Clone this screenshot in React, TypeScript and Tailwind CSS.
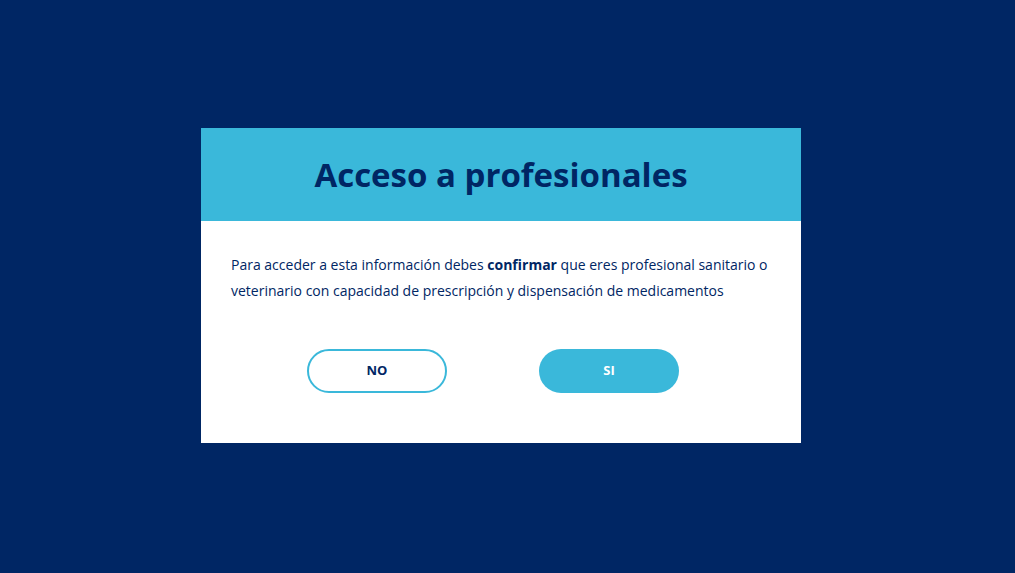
export default function App() {
  return (
    <div
      className="flex h-[573px] w-full items-center justify-center bg-[#002664] pb-[2px] pr-[13px]"
      style={{ fontFamily: '"Open Sans", sans-serif' }}
    >
      <div className="w-[600px] bg-white">
        {/* Header */}
        <div className="flex h-[93px] items-center justify-center bg-[#3ab8da]">
          <h1 className="text-[33px] font-bold text-[#002664]">Acceso a profesionales</h1>
        </div>

        {/* Body */}
        <div className="px-[30px] pb-[50px] pt-[31px]">
          <p className="text-[14px] leading-[26px] text-[#002664]">
            Para acceder a esta información debes <strong className="font-bold">confirmar</strong> que
            eres profesional sanitario o veterinario con capacidad de prescripción y dispensación de
            medicamentos
          </p>

          <div className="mt-[45px] flex justify-center gap-[92px] pr-[16px]">
            <button className="h-[44px] w-[140px] rounded-full border-2 border-[#3ab8da] bg-white text-[13px] font-bold text-[#002664]">
              NO
            </button>
            <button className="h-[44px] w-[140px] rounded-full bg-[#3ab8da] text-[13px] font-bold text-white">
              SI
            </button>
          </div>
        </div>
      </div>
    </div>
  )
}
